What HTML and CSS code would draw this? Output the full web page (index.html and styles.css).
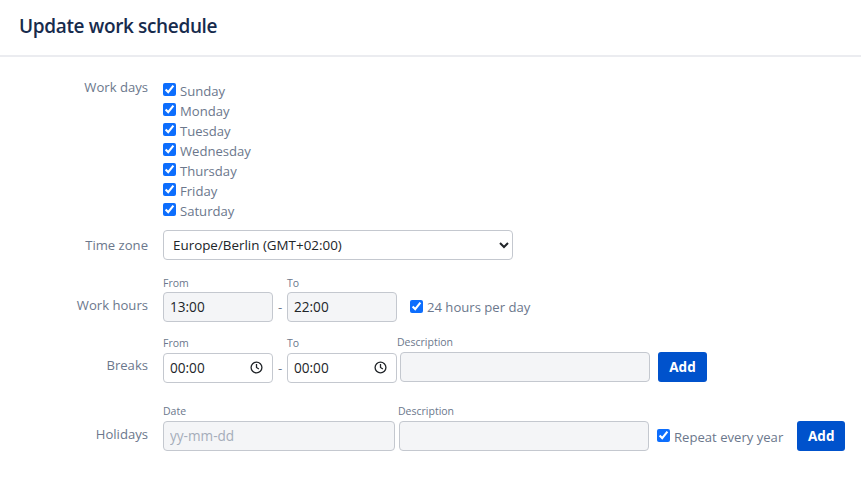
FILE: index.html
```html
<!DOCTYPE html>
<html lang="en">
<head>
<meta charset="utf-8">
<title>Update work schedule</title>
<link rel="stylesheet" href="styles.css">
</head>
<body>
<header class="page-header"><h1 class="page-title">Update work schedule</h1></header>
<form class="form">
  <div class="row row-days">
    <div class="row-label">Work days</div>
    <div class="days">
      <label class="check"><input type="checkbox" checked><span>Sunday</span></label>
      <label class="check"><input type="checkbox" checked><span>Monday</span></label>
      <label class="check"><input type="checkbox" checked><span>Tuesday</span></label>
      <label class="check"><input type="checkbox" checked><span>Wednesday</span></label>
      <label class="check"><input type="checkbox" checked><span>Thursday</span></label>
      <label class="check"><input type="checkbox" checked><span>Friday</span></label>
      <label class="check"><input type="checkbox" checked><span>Saturday</span></label>
    </div>
  </div>
  <div class="row row-zone">
    <div class="row-label label-zone">Time zone</div>
    <select class="zone"><option>Europe/Berlin (GMT+02:00)</option></select>
  </div>
  <div class="row row-hours">
    <div class="row-label">Work hours</div>
    <div class="fields">
      <div class="field"><span class="mini">From</span><input class="input w110 off" value="13:00" disabled></div>
      <span class="dash">-</span>
      <div class="field"><span class="mini">To</span><input class="input w110 off" value="22:00" disabled></div>
      <label class="check inline gap13"><input type="checkbox" checked><span>24 hours per day</span></label>
    </div>
  </div>
  <div class="row row-breaks">
    <div class="row-label">Breaks</div>
    <div class="fields">
      <div class="field"><span class="mini">From</span>
        <div class="time"><input class="time-text" value="00:00"><svg class="clock" viewBox="0 0 12 12"><circle cx="6" cy="6" r="5"/><path d="M6 2.8V6l2.2 1.4"/></svg></div>
      </div>
      <span class="dash">-</span>
      <div class="field"><span class="mini">To</span>
        <div class="time"><input class="time-text" value="00:00"><svg class="clock" viewBox="0 0 12 12"><circle cx="6" cy="6" r="5"/><path d="M6 2.8V6l2.2 1.4"/></svg></div>
      </div>
      <div class="field field-desc up"><span class="mini">Description</span><input class="input w250 off" disabled></div>
      <button type="button" class="btn gap8 up">Add</button>
    </div>
  </div>
  <div class="row row-holidays">
    <div class="row-label">Holidays</div>
    <div class="fields">
      <div class="field"><span class="mini">Date</span><input class="input w232 off" placeholder="yy-mm-dd" disabled></div>
      <div class="field field-desc2"><span class="mini">Description</span><input class="input w250 off" disabled></div>
      <label class="check inline gap8"><input type="checkbox" checked><span class="repeat">Repeat every year</span></label>
      <button type="button" class="btn btn-narrow">Add</button>
    </div>
  </div>
</form>
</body>
</html>
```
FILE: styles.css
```css
* { box-sizing: border-box; }
html, body { margin: 0; padding: 0; background: #fff; }
body {
  font-family: "Open Sans", "Noto Sans", sans-serif;
  font-size: 13.1px;
  color: #6b778c;
  height: 477px;
  overflow: hidden;
}
.page-header {
  height: 57px;
  padding: 13px 19px 0;
  border-bottom: 2px solid #ebecf0;
}
.page-title {
  margin: 0;
  font-size: 19px;
  line-height: 26px;
  font-weight: 600;
  letter-spacing: -0.35px;
  color: #172b4d;
}
.form { padding-top: 20px; }
.row {
  display: grid;
  grid-template-columns: 148px 1fr;
  column-gap: 15px;
  align-items: end;
}
.row-label {
  text-align: right;
  line-height: 20px;
  padding-bottom: 7px;
}
.row-breaks .row-label { padding-bottom: 8px; }
.row-days { align-items: start; }
.row-days .row-label { padding-bottom: 0; }
.days { padding-top: 4px; }
.check {
  display: flex;
  align-items: center;
  height: 20px;
}
.check input {
  width: 13px;
  height: 13px;
  margin: 0 4px 4px 0;
  accent-color: #0d6efd;
  flex: none;
}
.days .check span { line-height: 20px; margin-top: -1px; }
.row-zone { margin-top: 9px; }
.label-zone { padding-bottom: 5px; }
.zone {
  width: 350px;
  height: 30px;
  padding: 0 5px;
  font-family: inherit;
  font-size: 13.4px;
  color: #212529;
  background-color: #fff;
  border: 1px solid #c4c8cf;
  border-radius: 4px;
}
.row-hours { margin-top: 15px; }
.row-breaks { margin-top: 13px; }
.row-holidays { margin-top: 21px; }
.fields { display: flex; align-items: flex-end; }
.field { display: flex; flex-direction: column; }
.mini {
  font-size: 10.5px;
  line-height: 17px;
  height: 17px;
  color: #6b778c;
}
.row-breaks .mini, .row-holidays .mini { line-height: 15px; }
.input, .time {
  height: 30px;
  border: 1px solid #c4c8cf;
  border-radius: 4px;
  font-family: inherit;
  font-size: 13.6px;
  color: #212529;
}
.input { padding: 0 6px 2px; }
.input:disabled { color: #212529; -webkit-text-fill-color: #212529; opacity: 1; }
.input::placeholder { color: #a5adba; -webkit-text-fill-color: #a5adba; opacity: 1; }
.off { background: #f4f5f7; }
.w110 { width: 110px; }
.w232 { width: 232px; }
.w250 { width: 250px; }
.time {
  width: 110px;
  display: flex;
  align-items: center;
  padding: 0 9px 2px 6px;
  background: #fff;
}
.time-text {
  flex: 1;
  min-width: 0;
  border: 0;
  padding: 0;
  font: inherit;
  color: #212529;
  background: none;
  outline: none;
}
.clock {
  width: 13px;
  height: 13px;
  fill: none;
  stroke: #212529;
  stroke-width: 1.2;
  flex: none;
}
.dash {
  width: 14px;
  height: 30px;
  line-height: 30px;
  text-align: center;
  color: #6b778c;
}
.field-desc .input { margin-left: 3px; }
.up { margin-bottom: 1px; }
.field-desc2 { margin-left: 4px; }
.field-desc2 .mini { margin-left: -1px; }
.inline { height: 30px; white-space: nowrap; }
.inline input { margin-bottom: 2px; }
.repeat { margin-top: 1px; }
.gap13 { margin-left: 13px; }
.gap8 { margin-left: 8px; }
.btn {
  height: 30px;
  padding: 0;
  width: 49px;
  border: 0;
  border-radius: 3px;
  background: #0052cc;
  color: #fff;
  font: 700 13.5px "Open Sans", "Noto Sans", sans-serif;
}
.btn-narrow { width: 48px; margin-left: 14px; }
```
